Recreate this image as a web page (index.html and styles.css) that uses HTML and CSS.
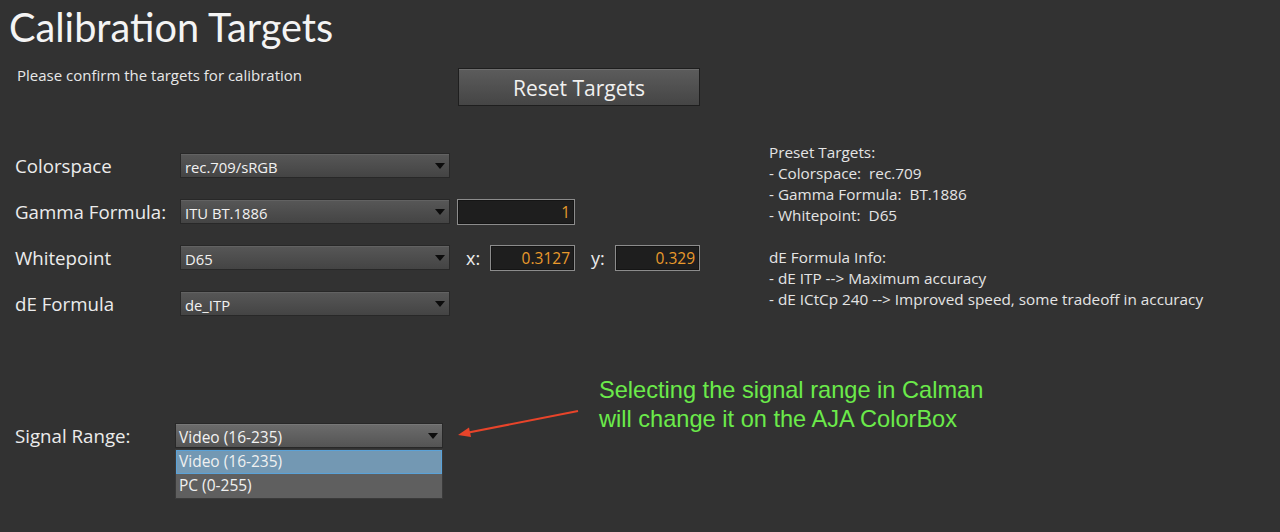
FILE: index.html
```html
<!DOCTYPE html>
<html>
<head>
<meta charset="utf-8">
<link rel="stylesheet" href="styles.css">
</head>
<body>
<div class="page">
  <h1 class="title">Calibration Targets</h1>
  <div class="intro">
    <p class="subtitle">Please confirm the targets for calibration</p>
    <button class="reset">Reset Targets</button>
  </div>

  <div class="main">
    <div class="form">
      <div class="row">
        <span class="label">Colorspace</span>
        <div class="select"><span>rec.709/sRGB</span><i class="caret"></i></div>
      </div>
      <div class="row">
        <span class="label">Gamma Formula:</span>
        <div class="select"><span>ITU BT.1886</span><i class="caret"></i></div>
        <div class="input wide">1</div>
      </div>
      <div class="row">
        <span class="label">Whitepoint</span>
        <div class="select"><span>D65</span><i class="caret"></i></div>
        <span class="axis axis-x">x:</span>
        <div class="input small">0.3127</div>
        <span class="axis axis-y">y:</span>
        <div class="input small">0.329</div>
      </div>
      <div class="row">
        <span class="label">dE Formula</span>
        <div class="select"><span>de_ITP</span><i class="caret"></i></div>
      </div>
    </div>

    <div class="info">
      <p>Preset Targets:</p>
      <p>- Colorspace:&nbsp; rec.709</p>
      <p>- Gamma Formula:&nbsp; BT.1886</p>
      <p>- Whitepoint:&nbsp; D65</p>
      <p class="gap">dE Formula Info:</p>
      <p>- dE ITP --&gt; Maximum accuracy</p>
      <p>- dE ICtCp 240 --&gt; Improved speed, some tradeoff in accuracy</p>
    </div>
  </div>

  <div class="signal">
    <div class="field">
      <span class="label">Signal Range:</span>
      <div class="combo">
        <div class="select light"><span>Video (16-235)</span><i class="caret"></i></div>
        <ul class="dropdown">
          <li class="active">Video (16-235)</li>
          <li>PC (0-255)</li>
        </ul>
      </div>
    </div>
    <p class="note">Selecting the signal range in Calman<br>will change it on the AJA ColorBox</p>
    <svg class="arrow" width="130" height="34" viewBox="0 0 130 34">
      <line x1="122" y1="2" x2="10" y2="24" stroke="#e8442a" stroke-width="2"/>
      <polygon points="2,26 13,18.5 15,28" fill="#e8442a"/>
    </svg>
  </div>
</div>
</body>
</html>
```

FILE: styles.css
```css
html, body {
  margin: 0;
  padding: 0;
  background: #323232;
}

.page {
  width: 1280px;
  height: 532px;
  overflow: hidden;
  font-family: "Open Sans", "Noto Sans", sans-serif;
  color: #e6e6e6;
}

.title {
  margin: 0;
  padding: 3px 0 0 9px;
  font-family: Lato, "Open Sans", sans-serif;
  font-weight: 400;
  font-size: 39.7px;
  line-height: 48px;
  color: #f4f4f4;
}

.intro {
  display: flex;
  align-items: flex-start;
  padding-top: 17px;
}

.subtitle {
  margin: -2px 0 0;
  width: 441px;
  padding-left: 17px;
  font-size: 15px;
  line-height: 18px;
  color: #e8e8e8;
}

.reset {
  width: 242px;
  height: 38px;
  margin: 0;
  padding: 0;
  border: 1px solid #1e1e1e;
  box-shadow: inset 0 1px 0 #6e6e6e;
  background: linear-gradient(#5c5c5c, #454545);
  color: #f0f0f0;
  font-family: inherit;
  font-size: 21px;
  line-height: 38px;
}

.main {
  display: flex;
  padding-top: 47px;
}

.form {
  display: flex;
  flex-direction: column;
  gap: 21px;
  width: 769px;
}

.row {
  display: flex;
  align-items: center;
  height: 25px;
}

.label {
  width: 165px;
  padding-left: 15px;
  font-size: 18.7px;
  color: #ececec;
}

.select {
  position: relative;
  box-sizing: border-box;
  width: 270px;
  height: 25px;
  border: 1px solid #282828;
  background: linear-gradient(#575757, #444444);
  box-shadow: inset 0 1px 0 #626262;
  display: flex;
  align-items: center;
  padding-left: 4px;
  padding-top: 2px;
  font-size: 14.8px;
  color: #f2f2f2;
}

.caret {
  position: absolute;
  right: 4px;
  top: 9px;
  width: 0;
  height: 0;
  border-left: 5px solid transparent;
  border-right: 5px solid transparent;
  border-top: 6px solid #0c0c0c;
}

.input {
  box-sizing: border-box;
  height: 26px;
  border: 1px solid #8c8c8c;
  box-shadow: inset 0 0 0 1px #151515;
  background: #1e1e1e;
  color: #e99a2c;
  font-size: 15.5px;
  text-align: right;
  padding-right: 4px;
  line-height: 24px;
}

.input.wide {
  width: 118px;
  margin-left: 7px;
}

.input.small {
  width: 85px;
}

.axis {
  font-size: 18px;
  color: #ececec;
}

.axis-x {
  margin-left: 16px;
  width: 24px;
}

.axis-y {
  margin-left: 16px;
  width: 24px;
}

.info {
  margin-top: -11px;
  font-size: 15.3px;
  line-height: 21px;
  color: #e4e4e4;
}

.info p {
  margin: 0;
}

.info .gap {
  margin-top: 21px;
}

.signal {
  position: relative;
  display: flex;
  align-items: flex-end;
  padding-top: 60px;
}

.field {
  display: flex;
  align-items: center;
  height: 25px;
}

.field .label {
  width: 160px;
}

.combo {
  position: relative;
}

.select.light {
  width: 268px;
  background: linear-gradient(#6c6c6c, #545454);
  box-shadow: inset 0 1px 0 #777;
  padding-left: 3px;
  font-size: 15.5px;
}

.dropdown {
  position: absolute;
  left: 0;
  top: 26px;
  box-sizing: border-box;
  width: 268px;
  margin: 0;
  padding: 0;
  list-style: none;
  border: 1px solid #3a3a3a;
  background: #5f5f5f;
  font-size: 15.5px;
  color: #f0f0f0;
}

.dropdown li {
  height: 24px;
  line-height: 23px;
  padding-left: 3px;
  box-sizing: border-box;
}

.dropdown li.active {
  background: #7398b3;
  border: 1px solid #5aa2d8;
  padding-left: 2px;
  line-height: 21px;
}

.note {
  margin: 0 0 14px 156px;
  font-family: "Liberation Sans", Arial, sans-serif;
  font-size: 23.6px;
  line-height: 29px;
  color: #6bea4a;
}

.arrow {
  position: absolute;
  left: 456px;
  top: 93px;
}
```
